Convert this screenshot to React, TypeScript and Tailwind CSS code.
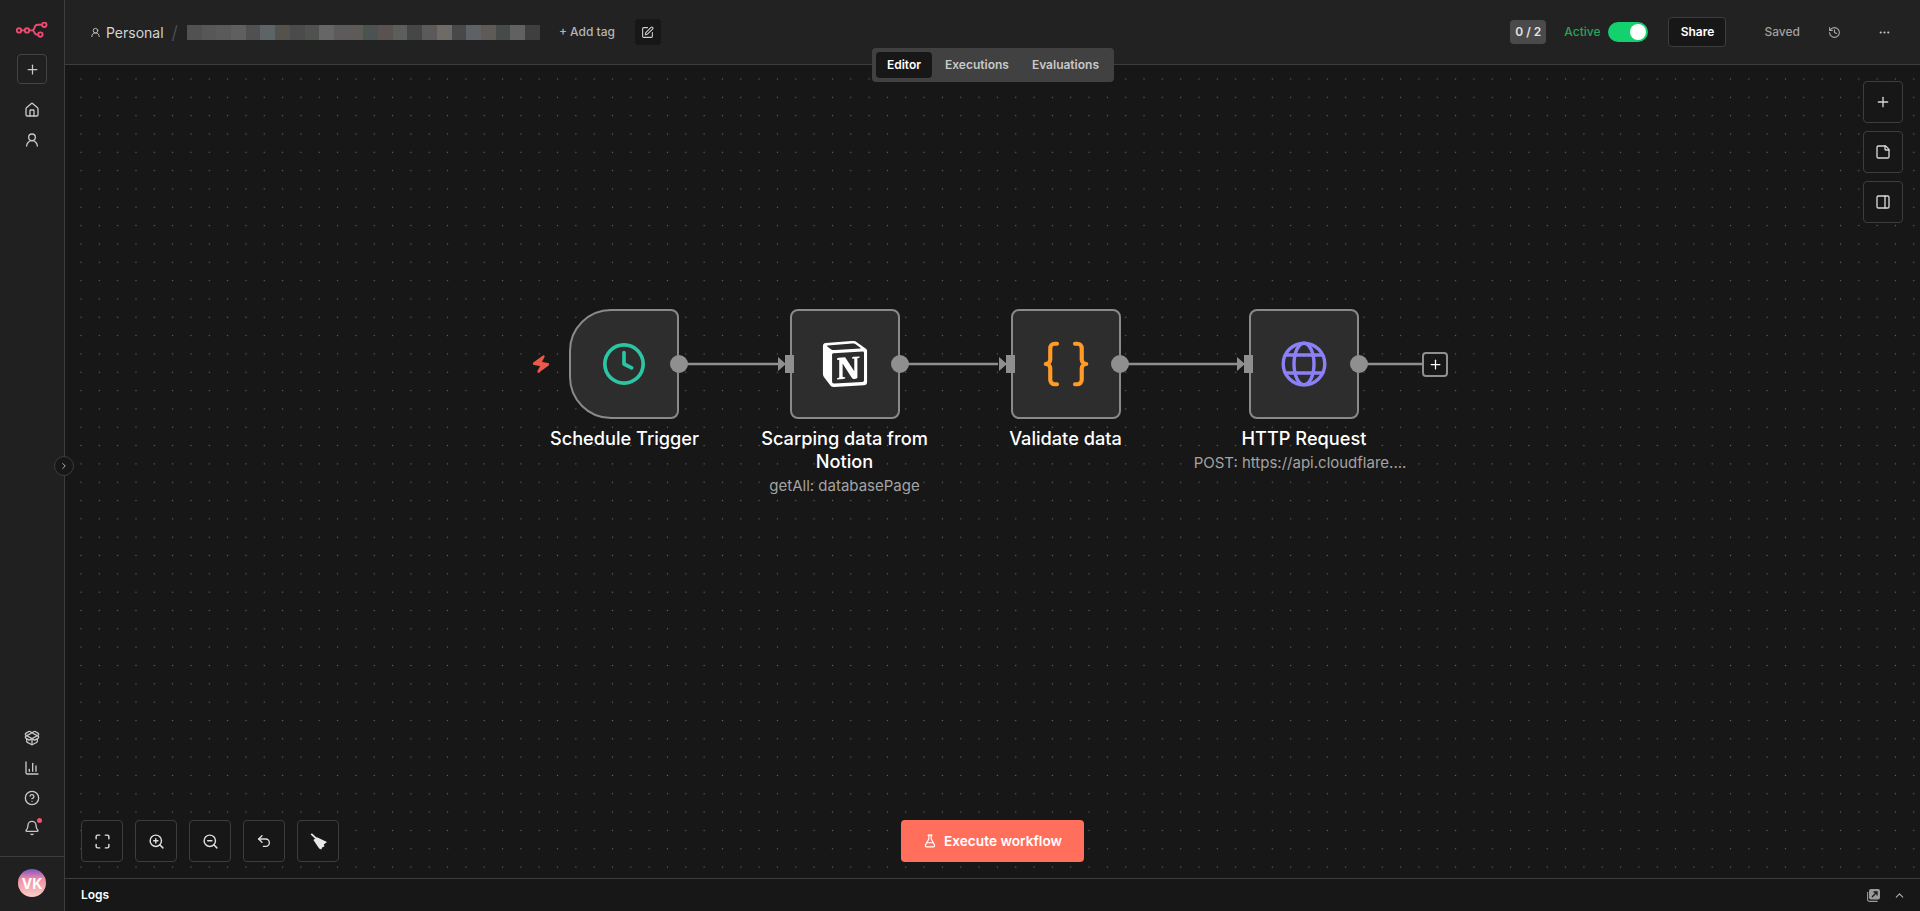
import {
  Plus,
  House,
  UserRound,
  PackageOpen,
  ChartColumn,
  CircleHelp,
  Bell,
  ChevronRight,
  ChevronUp,
  SquarePen,
  History,
  Ellipsis,
  StickyNote,
  PanelRight,
  Maximize,
  ZoomIn,
  ZoomOut,
  Undo2,
  FlaskConical,
  Clock,
  Braces,
  Zap,
} from "lucide-react";
import type { ReactNode } from "react";

const font = { fontFamily: "Inter, 'Noto Sans', sans-serif" };

// blurred workflow name in the header
const blurColors = [
  "#515151", "#575757", "#5a5a58", "#5f5f5f", "#505050", "#5c6468", "#55524d", "#4a4c4c",
  "#505250", "#666666", "#5c5a5a", "#5e5a58", "#4b5252", "#5a5250", "#5b5e5c", "#444648",
  "#5a5a5a", "#6e6a66", "#484848", "#5e6266", "#5f5a56", "#464a48", "#60625f", "#403e40",
];

function NotionLogo() {
  return (
    <svg width="46" height="46" viewBox="0 0 24 24">
      <path
        fill="#fff"
        d="M4.459 4.208c.746.606 1.026.56 2.428.466l13.215-.793c.28 0 .047-.28-.046-.326L17.86 1.968c-.42-.326-.981-.7-2.055-.607L3.01 2.295c-.466.046-.56.28-.374.466zm.793 3.08v13.904c0 .747.373 1.027 1.214.98l14.523-.84c.841-.046.935-.56.935-1.167V6.354c0-.606-.233-.933-.748-.887l-15.177.887c-.56.047-.747.327-.747.933zm14.337.745c.093.42 0 .84-.42.888l-.7.14v10.264c-.608.327-1.168.514-1.635.514-.748 0-.935-.234-1.495-.933l-4.577-7.186v6.952L12.21 19s0 .84-1.168.84l-3.222.186c-.093-.186 0-.653.327-.746l.84-.233V9.854L7.822 9.76c-.094-.42.14-1.026.793-1.073l3.456-.233 4.764 7.279v-6.44l-1.215-.14c-.093-.514.28-.887.747-.933zM1.936 1.035l13.31-.98c1.634-.14 2.055-.047 3.082.7l4.249 2.986c.7.513.934.653.934 1.213v16.378c0 1.026-.373 1.634-1.68 1.726l-15.458.934c-.98.047-1.448-.093-1.962-.747l-3.129-4.06c-.56-.747-.793-1.306-.793-1.96V2.667c0-.839.374-1.54 1.447-1.632z"
      />
    </svg>
  );
}

function GlobeIcon() {
  return (
    <svg width="48" height="48" viewBox="0 0 48 48" fill="none" stroke="#8c80f8" strokeWidth="3.4">
      <circle cx="24" cy="24" r="20.8" />
      <ellipse cx="24" cy="24" rx="10" ry="20.8" />
      <path d="M5.5 15h37M5.5 33h37" />
    </svg>
  );
}

function Logo() {
  return (
    <svg width="32" height="16" viewBox="0 0 32 16" fill="none" stroke="#ea4b71" strokeWidth="1.9">
      <circle cx="3" cy="8.4" r="2.2" />
      <circle cx="11" cy="8.4" r="2.2" />
      <circle cx="28.3" cy="2.8" r="2.2" />
      <circle cx="24.4" cy="12.6" r="2.2" />
      <path d="M5.2 8.4h3.6M13.2 8.4h2.6c1.6 0 2.2-.8 2.6-2.4.4-2 1.2-3.2 3.4-3.2h4.4M15.8 8.4c1.4 0 2.2.6 2.6 2 .4 1.4 1 2.2 3.8 2.2" />
    </svg>
  );
}

function BroomIcon() {
  return (
    <svg width="17" height="17" viewBox="0 0 16 16" fill="#e8e8e8">
      <path d="M.6 1.4 1.8.2l6 5.6-1.2 1.2z" />
      <path d="M3.2 6.6 6.6 4l9.4 4.4-3 2.4.6 2-2 .6-1 2.2-2-1z" />
    </svg>
  );
}

function PopOutIcon() {
  return (
    <svg width="13" height="13" viewBox="0 0 13 13" fill="none">
      <rect x="2" y="0" width="11" height="10.5" rx="2" fill="#9a9a9a" />
      <path d="M5 8 10 3M6.5 3H10v3.5" stroke="#171717" strokeWidth="1.3" />
      <path d="M.6 3v7.4a2 2 0 0 0 2 2h8" stroke="#9a9a9a" strokeWidth="1.1" />
    </svg>
  );
}

function CanvasButton({ children }: { children: ReactNode }) {
  return (
    <button className="flex h-[42px] w-[42px] items-center justify-center rounded border border-[#3d3d3d] bg-[#171717] text-[#e0e0e0]">
      {children}
    </button>
  );
}

function SideButton({ children }: { children: ReactNode }) {
  return (
    <button className="flex h-[42px] w-10 items-center justify-center rounded border border-[#3d3d3d] bg-[#171717] text-[#d8d8d8]">
      {children}
    </button>
  );
}

function NodeBox({ left, trigger, children }: { left: number; trigger?: boolean; children: ReactNode }) {
  return (
    <div
      className={`absolute top-[244px] flex h-[110px] w-[110px] items-center justify-center border-[2.5px] border-[#8a8a8a] bg-[#2d2d2d] ${
        trigger ? "rounded-l-[42px] rounded-r-lg" : "rounded-lg"
      }`}
      style={{ left }}
    >
      {children}
    </div>
  );
}

function NodeLabel({ center, title, sub, subShift = 0 }: { center: number; title: string[]; sub?: string; subShift?: number }) {
  return (
    <div className="absolute top-[362px] w-[260px] text-center" style={{ left: center - 130 }}>
      {title.map((line) => (
        <div key={line} className="text-[18.2px] leading-[23px] font-medium text-white">
          {line}
        </div>
      ))}
      {sub && (
        <div className="mt-[2px] text-[15px] leading-[22px] text-[#a3a3a3]" style={{ marginLeft: subShift }}>
          {sub}
        </div>
      )}
    </div>
  );
}

export default function App() {
  return (
    <div className="flex h-screen w-full overflow-hidden bg-[#171717] text-white" style={font}>
      <aside className="flex w-[65px] shrink-0 flex-col items-center border-r border-[#3d3d3d] bg-[#202020] text-[#c8c8c8]">
        <div className="mt-[22px] flex h-4 items-center justify-center">
          <Logo />
        </div>
        <button className="mt-4 flex h-[30px] w-[30px] items-center justify-center rounded border border-[#444444]">
          <Plus size={15} />
        </button>
        <div className="mt-[18px] flex flex-col items-center gap-[14px]">
          <House size={16} />
          <UserRound size={16} />
        </div>
        <div className="mt-auto flex flex-col items-center gap-[14px]">
          <PackageOpen size={16} />
          <ChartColumn size={16} />
          <CircleHelp size={16} />
          <div className="relative">
            <Bell size={16} />
            <span className="absolute -top-[2px] -right-[2px] h-[5px] w-[5px] rounded-full bg-[#f2546a]" />
          </div>
        </div>
        <div className="mt-[20px] flex h-[55px] w-full items-start justify-center border-t border-[#3d3d3d] pt-3">
          <div className="flex h-7 w-7 items-center justify-center rounded-full bg-[linear-gradient(180deg,#7a57c6_0%,#f08ba0_35%,#fbd0c8_100%)] text-[14px] font-bold text-white">
            VK
          </div>
        </div>
      </aside>

      <div className="relative flex min-w-0 flex-1 flex-col">
        {/* collapse toggle on the sidebar border */}
        <button className="absolute top-[456px] -left-[11px] z-10 flex h-5 w-5 items-center justify-center rounded-full border border-[#3d3d3d] bg-[#171717] text-[#cfcfcf]">
          <ChevronRight size={10} />
        </button>

        <header className="flex h-[65px] shrink-0 items-center border-b border-[#3d3d3d] bg-[#222222] pr-[29px] pl-[25px]">
          <UserRound size={11} className="text-[#c4c4c4]" />
          <span className="ml-[5px] text-[14px] text-[#d4d4d4]">Personal</span>
          <span className="mr-2 ml-2 text-[18px] font-light text-[#555555]">/</span>
          <div className="ml-[1px] flex h-[15px] w-[353px] overflow-hidden">
            {blurColors.map((c, i) => (
              <div key={i} className="h-full flex-1" style={{ backgroundColor: c }} />
            ))}
          </div>
          <span className="ml-[19px] text-[12px] font-medium text-[#b5b5b5]">+ Add tag</span>
          <button className="ml-5 flex h-[26px] w-[26px] items-center justify-center rounded bg-[#171717] text-[#d0d0d0]">
            <SquarePen size={13} />
          </button>

          <div className="ml-auto flex h-6 w-9 items-center justify-center rounded-sm bg-[#4a4a4a] text-[12px] font-semibold text-[#e2e2e2]">
            0 / 2
          </div>
          <span className="ml-[18px] text-[12px] font-medium text-[#2aa45d]">Active</span>
          <div className="ml-2 flex h-5 w-10 items-center justify-end rounded-full bg-[#13d16e] pr-[2px]">
            <div className="h-4 w-4 rounded-full bg-white" />
          </div>
          <button className="ml-5 h-[30px] w-[58px] rounded border border-[#3d3d3d] bg-[#171717] text-[12px] font-semibold text-white">
            Share
          </button>
          <span className="ml-[38px] text-[12px] font-medium text-[#a0a0a0]">Saved</span>
          <History size={13} className="ml-[28px] text-[#a8a8a8]" />
          <Ellipsis size={13} className="ml-[37px] text-[#c4c4c4]" />
        </header>

        <main className="relative min-h-0 flex-1 bg-[#171717] bg-[radial-gradient(circle,#666666_0.7px,transparent_1px)] bg-[length:18.33px_18.33px] bg-[position:6.83px_4.83px]">
          {/* tabs hang over the header border */}
          <div className="absolute top-[-17px] left-[807px] z-10 flex h-[34px] w-[242px] items-center rounded bg-[#414141] px-1 text-[12px] font-semibold text-[#c9c9c9]">
            <div className="flex h-[26px] w-14 items-center justify-center rounded bg-[#171717] text-white">Editor</div>
            <span className="ml-[13px]">Executions</span>
            <span className="ml-[23px]">Evaluations</span>
          </div>

          {/* edges */}
          <svg className="absolute inset-0 h-full w-full" fill="none">
            <path d="M615 299h98M835 299h98M1056 299h116M1294 299h65" stroke="#8f8f8f" strokeWidth="2.5" />
            <path d="M713 292l8 7-8 7zM934 292l8 7-8 7zM1172 292l8 7-8 7z" fill="#8f8f8f" />
          </svg>

          <NodeBox left={504} trigger>
            <Clock size={46} strokeWidth={1.9} className="text-[#2bc7a4]" />
          </NodeBox>
          <NodeBox left={725}>
            <NotionLogo />
          </NodeBox>
          <NodeBox left={945.5}>
            <Braces size={54} strokeWidth={1.85} className="text-[#ff9b26]" />
          </NodeBox>
          <NodeBox left={1184}>
            <GlobeIcon />
          </NodeBox>

          {/* output handles */}
          {[605, 826, 1046, 1285].map((x) => (
            <span key={x} className="absolute top-[290px] h-[18px] w-[18px] rounded-full bg-[#8f8f8f]" style={{ left: x }} />
          ))}
          {/* input handles */}
          {[720, 941, 1179].map((x) => (
            <span key={x} className="absolute top-[290px] h-[18px] w-[9px] bg-[#8f8f8f]" style={{ left: x }} />
          ))}

          <Zap size={20} fill="#ea5a4a" stroke="#ea5a4a" strokeWidth={1.5} className="absolute top-[289px] left-[466px] rotate-[10deg]" />

          <button className="absolute top-[287px] left-[1357px] flex h-[25px] w-[26px] items-center justify-center rounded border-2 border-[#8f8f8f] bg-[#171717] text-white">
            <Plus size={15} />
          </button>

          <NodeLabel center={559.5} title={["Schedule Trigger"]} />
          <NodeLabel center={779.5} title={["Scarping data from", "Notion"]} sub="getAll: databasePage" />
          <NodeLabel center={1000.5} title={["Validate data"]} />
          <NodeLabel center={1239} title={["HTTP Request"]} sub="POST: https://api.cloudflare...." subShift={-8} />

          <div className="absolute top-4 right-[17px] flex flex-col gap-2">
            <SideButton><Plus size={16} /></SideButton>
            <SideButton><StickyNote size={16} /></SideButton>
            <SideButton><PanelRight size={16} /></SideButton>
          </div>

          <div className="absolute bottom-4 left-4 flex gap-3">
            <CanvasButton><Maximize size={17} /></CanvasButton>
            <CanvasButton><ZoomIn size={17} /></CanvasButton>
            <CanvasButton><ZoomOut size={17} /></CanvasButton>
            <CanvasButton><Undo2 size={16} /></CanvasButton>
            <CanvasButton><BroomIcon /></CanvasButton>
          </div>

          <button className="absolute bottom-4 left-[836px] flex h-[42px] w-[183px] items-center justify-center gap-[7px] rounded bg-[#ff6f5c] text-[13.7px] font-semibold text-white">
            <FlaskConical size={14} />
            Execute workflow
          </button>
        </main>

        <footer className="flex h-[33px] shrink-0 items-center border-t border-[#3d3d3d] bg-[#171717] pr-[14px] pl-4">
          <span className="text-[12px] font-semibold text-white">Logs</span>
          <span className="ml-auto">
            <PopOutIcon />
          </span>
          <ChevronUp size={13} className="ml-[13px] text-[#b0b0b0]" />
        </footer>
      </div>
    </div>
  );
}
